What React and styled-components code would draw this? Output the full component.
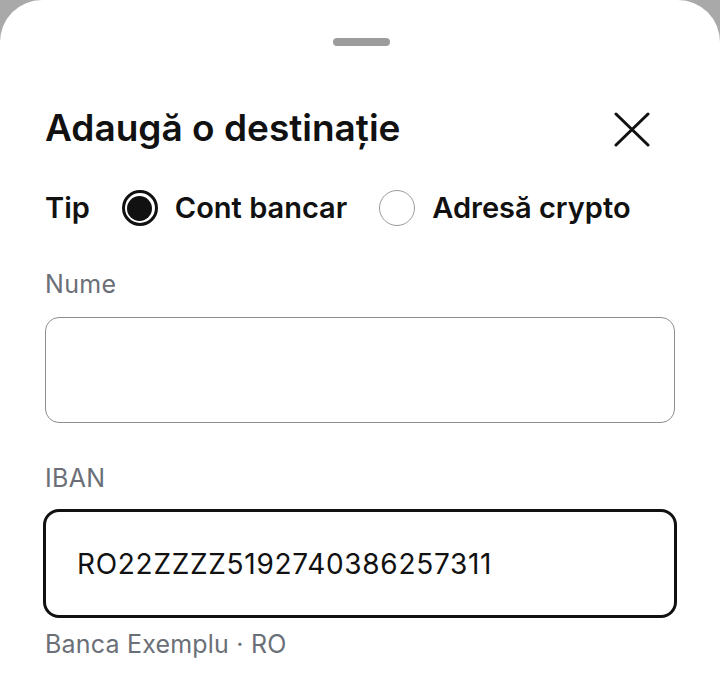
import React, { useState } from 'react'
import styled, { createGlobalStyle } from 'styled-components'

const GlobalStyle = createGlobalStyle`
  html, body {
    margin: 0;
    padding: 0;
    background: #a9a9a9;
  }
  body {
    font-family: Inter, "Noto Sans", "Liberation Sans", sans-serif;
    color: #111;
  }
`

const Sheet = styled.div`
  background: #fff;
  border-radius: 42px 42px 0 0;
  min-height: 676px;
  box-sizing: border-box;
  padding: 38px 45px 0 45px;
  display: flex;
  flex-direction: column;
`

const Handle = styled.div`
  width: 57px;
  height: 8px;
  border-radius: 4px;
  background: #9c9c9c;
  align-self: center;
  margin-left: 3px;
`

const Header = styled.div`
  margin-top: 62px;
  height: 40px;
  display: flex;
  align-items: center;
  justify-content: space-between;
`

const Title = styled.h1`
  margin: 0;
  font-size: 37px;
  line-height: 40px;
  font-weight: 600;
`

const CloseButton = styled.button`
  border: 0;
  background: none;
  padding: 0;
  margin-right: 25px;
  margin-top: 4px;
  width: 36px;
  height: 36px;
  display: flex;
  cursor: pointer;
`

const TypeRow = styled.div`
  margin-top: 42px;
  height: 36px;
  display: flex;
  align-items: center;
`

const TypeLabel = styled.span`
  font-size: 29px;
  line-height: 36px;
  font-weight: 600;
  margin-right: 32px;
`

const Option = styled.label`
  display: flex;
  align-items: center;
  gap: 17px;
  margin-right: 32px;
  font-size: 29px;
  line-height: 36px;
  font-weight: 600;
  cursor: pointer;
`

const RadioCircle = styled.span`
  box-sizing: border-box;
  width: 36px;
  height: 36px;
  border-radius: 50%;
  border: ${p => (p.$checked ? '3px solid #111' : '1.5px solid #9a9a9a')};
  display: flex;
  align-items: center;
  justify-content: center;

  &::after {
    content: '';
    width: 25px;
    height: 25px;
    border-radius: 50%;
    background: #111;
    display: ${p => (p.$checked ? 'block' : 'none')};
  }
`

const FieldLabel = styled.div`
  margin-top: ${p => p.$top}px;
  font-size: 25px;
  line-height: 30px;
  letter-spacing: 0.3px;
  color: #6b6f77;
`

const InputBox = styled.div`
  box-sizing: border-box;
  margin: ${p => (p.$focused ? '16px -2px 0' : '18px 0 0')};
  height: ${p => (p.$focused ? 109 : 106)}px;
  border: ${p => (p.$focused ? '3px solid #111' : '1.5px solid #8e8e8e')};
  border-radius: ${p => (p.$focused ? 16 : 14)}px;
  display: flex;
  align-items: center;
  padding-left: ${p => (p.$focused ? 31 : 30)}px;
`

const InputText = styled.input`
  border: 0;
  outline: none;
  background: transparent;
  width: 100%;
  padding: 0;
  font-family: inherit;
  font-size: 28px;
  line-height: 34px;
  letter-spacing: 0.7px;
  color: #111;
`

const Hint = styled.div`
  margin-top: 11px;
  font-size: 25px;
  line-height: 30px;
  letter-spacing: 0.2px;
  color: #6b6f77;
`

function CloseIcon() {
  return (
    <svg width="36" height="36" viewBox="0 0 36 36" fill="none">
      <path d="M2 2 L34 33 M34 2 L2 33" stroke="#111" strokeWidth="3" strokeLinecap="round" />
    </svg>
  )
}

export default function App() {
  const [type, setType] = useState('bank')
  const [name, setName] = useState('')
  const [iban, setIban] = useState('RO22ZZZZ5192740386257311')

  return (
    <>
      <GlobalStyle />
      <Sheet>
        <Handle />
        <Header>
          <Title>Adaugă o destinație</Title>
          <CloseButton aria-label="Închide">
            <CloseIcon />
          </CloseButton>
        </Header>
        <TypeRow>
          <TypeLabel>Tip</TypeLabel>
          <Option onClick={() => setType('bank')}>
            <RadioCircle $checked={type === 'bank'} />
            Cont bancar
          </Option>
          <Option onClick={() => setType('crypto')}>
            <RadioCircle $checked={type === 'crypto'} />
            Adresă crypto
          </Option>
        </TypeRow>

        <FieldLabel $top={43}>Nume</FieldLabel>
        <InputBox>
          <InputText value={name} onChange={e => setName(e.target.value)} />
        </InputBox>

        <FieldLabel $top={40}>IBAN</FieldLabel>
        <InputBox $focused>
          <InputText value={iban} onChange={e => setIban(e.target.value)} />
        </InputBox>
        <Hint>Banca Exemplu · RO</Hint>
      </Sheet>
    </>
  )
}
